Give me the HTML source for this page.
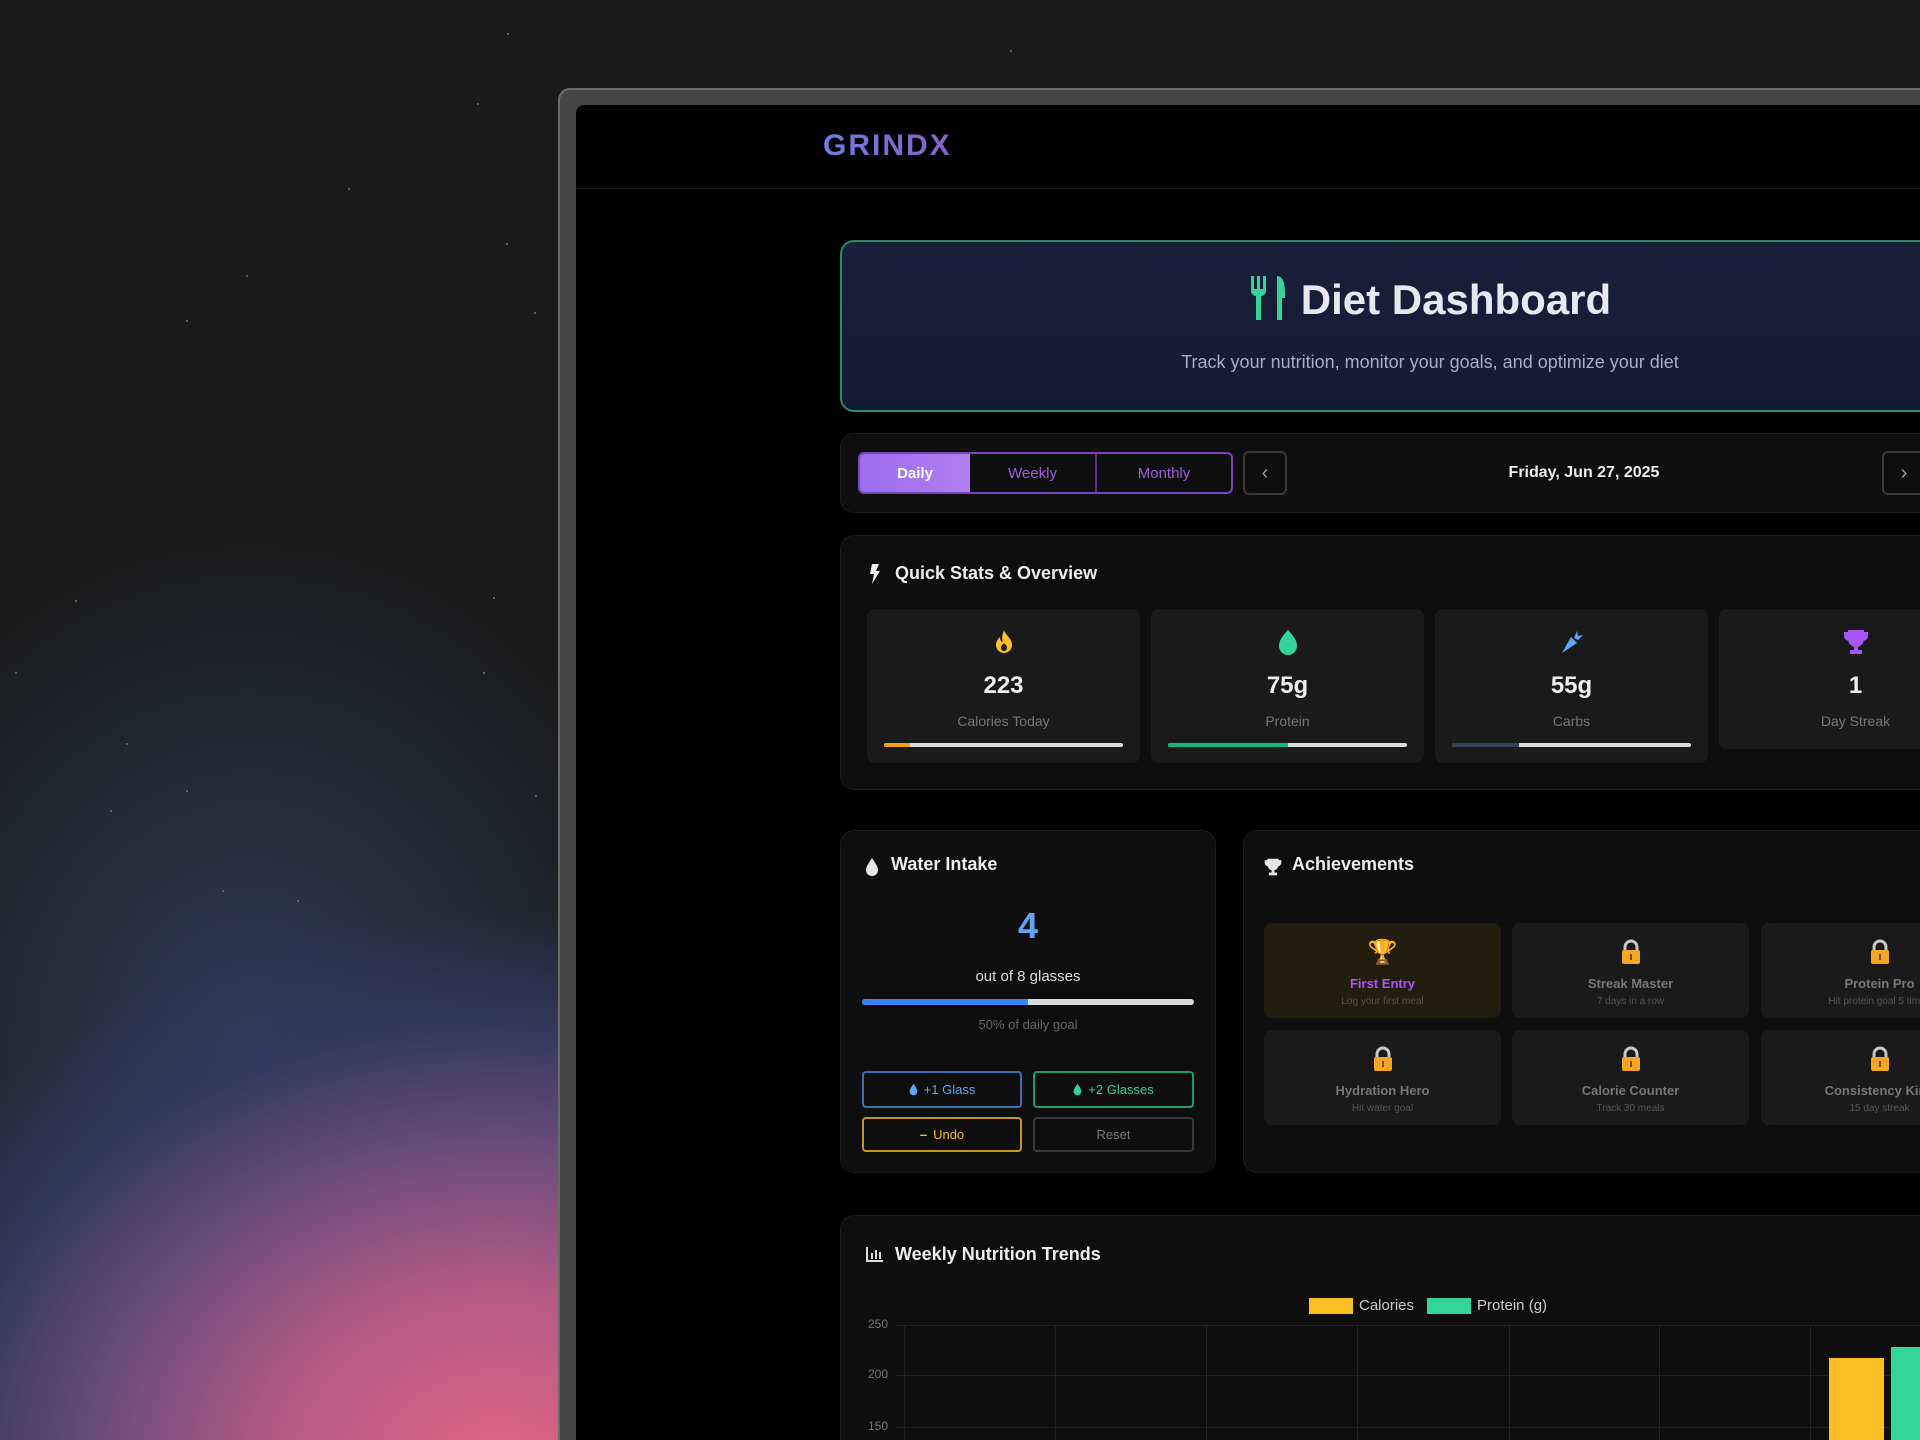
<!DOCTYPE html>
<html><head><meta charset="utf-8"><style>
*{box-sizing:border-box;margin:0;padding:0}
html,body{width:1920px;height:1440px;overflow:hidden;background:#1a1a1a}
body{font-family:"Liberation Sans","DejaVu Sans",sans-serif}
#w{position:absolute;left:0;top:0;width:1920px;height:1440px;overflow:hidden;
background:radial-gradient(ellipse 700px 560px at 500px 1470px,#e06585 0%,#b45a85 32%,#6a4c7c 58%,rgba(50,58,95,0.9) 80%,rgba(26,26,26,0) 100%),radial-gradient(ellipse 600px 700px at 250px 1050px,#2e3b58 0%,rgba(26,26,26,0) 75%),#1a1a1a}
.star{position:absolute;width:2px;height:2px;background:#777;border-radius:50%}
.frame{position:absolute;left:558px;top:88px;width:1362px;height:1352px;background:#454545;border:2px solid #6a6a6a;border-right:none;border-bottom:none;border-radius:12px 0 0 0}
.screen{position:absolute;left:576px;top:105px;width:1344px;height:1335px;background:#000;border-radius:8px 0 0 0;overflow:hidden}
.hdr{position:absolute;left:0;top:0;width:100%;height:84px;border-bottom:1px solid #1c1c1c}
.logo{position:absolute;left:247px;top:24px;font-size:30px;font-weight:bold;letter-spacing:2px;background:linear-gradient(90deg,#6a7ee0,#8a5fc8);-webkit-background-clip:text;color:transparent}
.abs{position:absolute}
.card{position:absolute;background:#0e0e0e;border:1px solid #1c1c1c;border-radius:14px}
.hero{left:264px;top:135px;width:1180px;height:172px;border:2px solid #2c8a68;border-radius:14px;background:linear-gradient(180deg,#1a1f3a,#151a33)}
.hero h1{position:absolute;left:0;width:100%;top:34px;text-align:center;font-size:42px;color:#e8e8f2;font-weight:bold}
.hero p{position:absolute;left:0;width:100%;top:110px;text-align:center;font-size:18px;color:#a8aec0}
.tabs{left:282px;top:347px;width:375px;height:42px;border:2px solid #7a44b8;border-radius:6px;display:flex;overflow:hidden}
.tabs div{display:flex;align-items:center;justify-content:center;font-size:15px;color:#9b5fdc}
.btn{position:absolute;border:2px solid #3a3a3a;border-radius:6px;color:#999;font-size:20px;display:flex;align-items:center;justify-content:center}
.sec{font-size:18px;font-weight:bold;color:#eee;position:absolute}
.stat{position:absolute;top:504px;width:273px;height:154px;background:#1a1a1a;border-radius:8px;text-align:center}
.stat .v{position:absolute;top:63px;width:100%;font-size:24px;font-weight:bold;color:#eee}
.stat .l{position:absolute;top:104px;width:100%;font-size:14px;color:#777}
.stat .bar{position:absolute;left:17px;right:17px;top:134px;height:4px;background:#d8dcd8;border-radius:2px;overflow:hidden}
.stat .ic{position:absolute;top:20px;left:0;width:100%;display:flex;justify-content:center}
.ach{position:absolute;width:237px;height:95px;background:#1a1a1a;border-radius:8px;text-align:center}
.ach .t{position:absolute;top:53px;width:100%;font-size:13px;font-weight:bold;color:#777}
.ach .s{position:absolute;top:73px;width:100%;font-size:10px;color:#555;white-space:nowrap}
.ach .i{position:absolute;top:16px;width:100%;font-size:24px;line-height:28px;display:flex;justify-content:center}
.wb{position:absolute;height:37px;border:2px solid;border-radius:4px;font-size:13px;display:flex;align-items:center;justify-content:center;gap:6px}
</style></head><body><div id="w">
<div class="star" style="left:507px;top:33px"></div><div class="star" style="left:1010px;top:50px"></div>
<div class="star" style="left:477px;top:103px"></div><div class="star" style="left:348px;top:188px"></div>
<div class="star" style="left:246px;top:275px"></div><div class="star" style="left:186px;top:320px"></div>
<div class="star" style="left:506px;top:243px"></div><div class="star" style="left:534px;top:312px"></div>
<div class="star" style="left:75px;top:600px"></div><div class="star" style="left:493px;top:597px"></div>
<div class="star" style="left:483px;top:672px"></div><div class="star" style="left:126px;top:743px"></div>
<div class="star" style="left:186px;top:790px"></div><div class="star" style="left:535px;top:795px"></div>
<div class="star" style="left:222px;top:890px"></div><div class="star" style="left:297px;top:900px"></div>
<div class="star" style="left:110px;top:810px"></div><div class="star" style="left:15px;top:672px"></div>
<div class="frame"></div>
<div class="screen">
 <div class="hdr"><div class="logo">GRINDX</div></div>
 <div class="abs hero">
  <h1><svg width="38" height="44" viewBox="0 0 38 44" style="vertical-align:-6px;margin-right:14px"><g fill="#34d399"><rect x="2" y="0" width="3" height="14"/><rect x="8" y="0" width="3" height="14"/><rect x="14" y="0" width="3" height="14"/><path d="M2 13h15v3a6 6 0 0 1-5 4v24h-5V20a6 6 0 0 1-5-4z"/><path d="M28 0c6 0 8 8 8 16v6h-3v22h-5z"/></g></svg>Diet Dashboard</h1>
  <p>Track your nutrition, monitor your goals, and optimize your diet</p>
 </div>
 <div class="card" style="left:264px;top:328px;width:1200px;height:80px"></div>
 <div class="abs tabs">
  <div style="width:110px;background:linear-gradient(90deg,#9b6ef0,#b07ef0);color:#fff;font-weight:bold">Daily</div>
  <div style="width:127px;border-right:2px solid #5a2f8a">Weekly</div>
  <div style="flex:1">Monthly</div>
 </div>
 <div class="btn" style="left:667px;top:346px;width:44px;height:44px">‹</div>
 <div class="abs" style="left:900px;width:216px;top:359px;text-align:center;font-size:16px;font-weight:bold;color:#eee">Friday, Jun 27, 2025</div>
 <div class="btn" style="left:1306px;top:346px;width:44px;height:44px">›</div>

 <div class="card" style="left:264px;top:430px;width:1200px;height:255px"></div>
 <svg class="abs" style="left:293px;top:459px" width="12" height="20" viewBox="0 0 12 20"><path d="M3 0h7L7 7h4L3 20l2-10H1z" fill="#eee"/></svg>
 <div class="sec" style="left:319px;top:458px">Quick Stats &amp; Overview</div>
 <div class="stat" style="left:291px"><div class="ic"><svg width="20" height="26" viewBox="0 0 20 26"><path d="M10 1c1 5 8 8 8 15a8 8 0 0 1-16 0c0-4 2-6 4-8 0 3 1 5 3 5-2-4 0-9 1-12z" fill="#fbbf24"/><path d="M10 14c-2 2-3 3-3 5a3 3 0 0 0 6 0c0-2-1-3-3-5z" fill="#1a1a1a"/></svg></div><div class="v">223</div><div class="l">Calories Today</div><div class="bar"><div style="width:11%;height:100%;background:#f59e0b"></div></div></div>
 <div class="stat" style="left:575px"><div class="ic"><svg width="20" height="26" viewBox="0 0 20 26"><path d="M10 1C4 7 1 12 1 17a9 9 0 0 0 18 0C19 12 16 7 10 1z" fill="#34d399"/></svg></div><div class="v">75g</div><div class="l">Protein</div><div class="bar"><div style="width:50%;height:100%;background:#10b981"></div></div></div>
 <div class="stat" style="left:859px"><div class="ic"><svg width="26" height="26" viewBox="0 0 26 26"><path d="M3 24 L12 8 L18 14 Z" fill="#60a5fa"/><path d="M15 9l3-7 1 5 5-1-5 5z" fill="#60a5fa"/></svg></div><div class="v">55g</div><div class="l">Carbs</div><div class="bar"><div style="width:28%;height:100%;background:#374151"></div></div></div>
 <div class="stat" style="left:1143px;height:140px"><div class="ic"><svg width="24" height="26" viewBox="0 0 24 26"><path d="M5 2h14v8a7 7 0 0 1-14 0z M5 4H1v3a4 4 0 0 0 4 4 M19 4h4v3a4 4 0 0 1-4 4" fill="#a855f7" stroke="#a855f7" stroke-width="2"/><rect x="10" y="16" width="4" height="5" fill="#a855f7"/><rect x="6" y="21" width="12" height="4" fill="#a855f7"/></svg></div><div class="v">1</div><div class="l">Day Streak</div></div>

 <div class="card" style="left:264px;top:725px;width:376px;height:343px"></div>
 <svg class="abs" style="left:289px;top:752px" width="14" height="20" viewBox="0 0 14 20"><path d="M7 1C3 7 1 10 1 13a6 6 0 0 0 12 0C13 10 11 7 7 1z" fill="#e5e5e5"/></svg>
 <div class="sec" style="left:315px;top:749px">Water Intake</div>
 <div class="abs" style="left:264px;width:376px;top:800px;text-align:center;font-size:36px;font-weight:bold;color:#60a5fa">4</div>
 <div class="abs" style="left:264px;width:376px;top:863px;text-align:center;font-size:15px;color:#ddd">out of 8 glasses</div>
 <div class="abs" style="left:286px;width:332px;top:894px;height:6px;background:#d8dcd8;border-radius:3px;overflow:hidden"><div style="width:50%;height:100%;background:#3b82f6"></div></div>
 <div class="abs" style="left:264px;width:376px;top:912px;text-align:center;font-size:13px;color:#666">50% of daily goal</div>
 <div class="wb" style="left:286px;top:966px;width:160px;border-color:#3b6fb8;color:#60a5fa"><svg width="9" height="13" viewBox="0 0 14 20"><path d="M7 1C3 7 1 10 1 13a6 6 0 0 0 12 0C13 10 11 7 7 1z" fill="#60a5fa"/></svg>+1 Glass</div>
 <div class="wb" style="left:457px;top:966px;width:161px;border-color:#1f9a6a;color:#34d399"><svg width="9" height="13" viewBox="0 0 14 20"><path d="M7 1C3 7 1 10 1 13a6 6 0 0 0 12 0C13 10 11 7 7 1z" fill="#34d399"/></svg>+2 Glasses</div>
 <div class="wb" style="left:286px;top:1012px;width:160px;height:35px;border-color:#c9961a;color:#fbbf24"><b>–</b> Undo</div>
 <div class="wb" style="left:457px;top:1012px;width:161px;height:35px;border-color:#3a3a44;color:#777">Reset</div>

 <div class="card" style="left:667px;top:725px;width:800px;height:343px"></div>
 <svg class="abs" style="left:688px;top:753px" width="18" height="18" viewBox="0 0 24 26"><path d="M5 2h14v8a7 7 0 0 1-14 0z M5 4H1v3a4 4 0 0 0 4 4 M19 4h4v3a4 4 0 0 1-4 4" fill="#e5e5e5" stroke="#e5e5e5" stroke-width="2"/><rect x="10" y="16" width="4" height="5" fill="#e5e5e5"/><rect x="6" y="21" width="12" height="4" fill="#e5e5e5"/></svg>
 <div class="sec" style="left:716px;top:749px">Achievements</div>
 <div class="ach" style="left:688px;top:818px;background:#221d0e"><div class="i">🏆</div><div class="t" style="color:#a855f7">First Entry</div><div class="s">Log your first meal</div></div>
 <div class="ach" style="left:936px;top:818px"><div class="i"><svg width="22" height="26" viewBox="0 0 22 26"><path d="M5 12V8a6 6 0 0 1 12 0v4" stroke="#c8c8c8" stroke-width="3" fill="none"/><rect x="2" y="11" width="18" height="14" rx="2" fill="#f5a623"/><rect x="10" y="15" width="2" height="6" fill="#7a4a10"/></svg></div><div class="t">Streak Master</div><div class="s">7 days in a row</div></div>
 <div class="ach" style="left:1185px;top:818px"><div class="i"><svg width="22" height="26" viewBox="0 0 22 26"><path d="M5 12V8a6 6 0 0 1 12 0v4" stroke="#c8c8c8" stroke-width="3" fill="none"/><rect x="2" y="11" width="18" height="14" rx="2" fill="#f5a623"/><rect x="10" y="15" width="2" height="6" fill="#7a4a10"/></svg></div><div class="t">Protein Pro</div><div class="s">Hit protein goal 5 times</div></div>
 <div class="ach" style="left:688px;top:925px"><div class="i"><svg width="22" height="26" viewBox="0 0 22 26"><path d="M5 12V8a6 6 0 0 1 12 0v4" stroke="#c8c8c8" stroke-width="3" fill="none"/><rect x="2" y="11" width="18" height="14" rx="2" fill="#f5a623"/><rect x="10" y="15" width="2" height="6" fill="#7a4a10"/></svg></div><div class="t">Hydration Hero</div><div class="s">Hit water goal</div></div>
 <div class="ach" style="left:936px;top:925px"><div class="i"><svg width="22" height="26" viewBox="0 0 22 26"><path d="M5 12V8a6 6 0 0 1 12 0v4" stroke="#c8c8c8" stroke-width="3" fill="none"/><rect x="2" y="11" width="18" height="14" rx="2" fill="#f5a623"/><rect x="10" y="15" width="2" height="6" fill="#7a4a10"/></svg></div><div class="t">Calorie Counter</div><div class="s">Track 30 meals</div></div>
 <div class="ach" style="left:1185px;top:925px"><div class="i"><svg width="22" height="26" viewBox="0 0 22 26"><path d="M5 12V8a6 6 0 0 1 12 0v4" stroke="#c8c8c8" stroke-width="3" fill="none"/><rect x="2" y="11" width="18" height="14" rx="2" fill="#f5a623"/><rect x="10" y="15" width="2" height="6" fill="#7a4a10"/></svg></div><div class="t">Consistency King</div><div class="s">15 day streak</div></div>

 <div class="card" style="left:264px;top:1110px;width:1200px;height:260px"></div>
 <svg class="abs" style="left:290px;top:1141px" width="18" height="16" viewBox="0 0 18 16"><path d="M1 1v14h16" stroke="#ddd" stroke-width="2" fill="none"/><rect x="5" y="7" width="2" height="6" fill="#ddd"/><rect x="9" y="4" width="2" height="9" fill="#ddd"/><rect x="13" y="6" width="2" height="7" fill="#ddd"/></svg>
 <div class="sec" style="left:319px;top:1139px">Weekly Nutrition Trends</div>
 <div class="abs" style="left:733px;top:1193px;width:44px;height:16px;background:#fbbf24"></div>
 <div class="abs" style="left:783px;top:1192px;font-size:15px;color:#ccc">Calories</div>
 <div class="abs" style="left:851px;top:1193px;width:44px;height:16px;background:#34d399"></div>
 <div class="abs" style="left:901px;top:1192px;font-size:15px;color:#ccc">Protein (g)</div>
 <div class="abs" style="left:292px;top:1212px;font-size:12px;color:#777">250</div>
 <div class="abs" style="left:292px;top:1262px;font-size:12px;color:#777">200</div>
 <div class="abs" style="left:292px;top:1314px;font-size:12px;color:#777">150</div>
 <svg class="abs" style="left:320px;top:1220px" width="1024" height="115"><g stroke="#222" stroke-width="1"><line x1="0" y1="0.5" x2="1100" y2="0.5"/><line x1="0" y1="50.5" x2="1100" y2="50.5"/><line x1="0" y1="102.5" x2="1100" y2="102.5"/><line x1="8.5" y1="0" x2="8.5" y2="220"/><line x1="159.5" y1="0" x2="159.5" y2="220"/><line x1="310.5" y1="0" x2="310.5" y2="220"/><line x1="461.5" y1="0" x2="461.5" y2="220"/><line x1="613.5" y1="0" x2="613.5" y2="220"/><line x1="763.5" y1="0" x2="763.5" y2="220"/><line x1="914.5" y1="0" x2="914.5" y2="220"/></g><rect x="933" y="33" width="55" height="200" fill="#fbbf24"/><rect x="995" y="22" width="60" height="200" fill="#34d399"/></svg>
</div>
</div></body></html>
